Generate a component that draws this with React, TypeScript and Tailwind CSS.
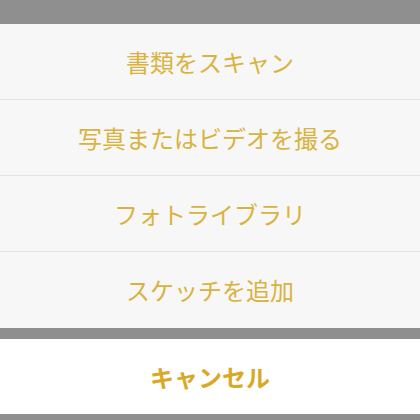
const ACTIONS = ["書類をスキャン", "写真またはビデオを撮る", "フォトライブラリ", "スケッチを追加"];

export default function App() {
  return (
    <div
      className="w-[420px] h-[420px] bg-[#8f8f8f] flex flex-col overflow-hidden"
      style={{ fontFamily: '"Noto Sans CJK JP", "Noto Sans", sans-serif' }}
    >
      <div className="h-[24px] shrink-0" />
      {/* Action list */}
      <div className="flex flex-col bg-[#f7f7f7]">
        {ACTIONS.map((label, i) => (
          <div
            key={label}
            className={`h-[76px] flex items-center justify-center text-[24px] text-[#d9b340] ${
              i < ACTIONS.length - 1 ? "border-b border-[#e3e3e3]" : "h-[75px]"
            }`}
          >
            {label}
          </div>
        ))}
      </div>
      <div className="h-[11px] shrink-0" />
      <div className="h-[75px] shrink-0 bg-white flex items-center justify-center text-[24px] font-bold text-[#d8a927]">
        キャンセル
      </div>
    </div>
  );
}
